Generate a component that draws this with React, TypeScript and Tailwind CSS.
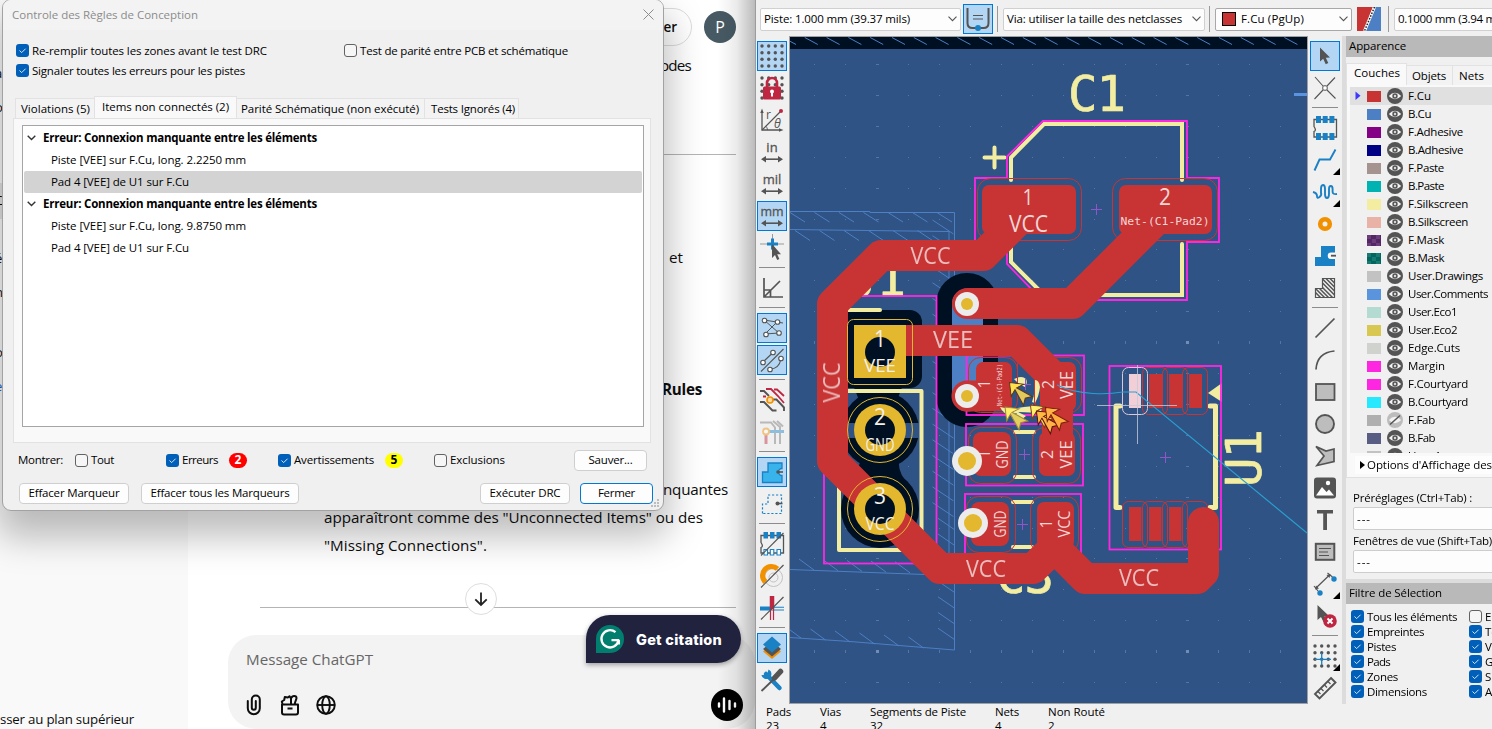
import React, { useLayoutEffect, useRef, useState } from "react";

/* Text run whose tracking is computed so that it fills a given width. */
function Fit({ w, className = "", children }: { w: number; className?: string; children: string }) {
  const ref = useRef<HTMLSpanElement>(null);
  const [ls, setLs] = useState(0);
  useLayoutEffect(() => {
    if (ref.current) setLs((w - ref.current.getBoundingClientRect().width) / children.length);
  }, [w, children]);
  return (
    <span ref={ref} className={"inline-block shrink-0 whitespace-pre " + className} style={{ letterSpacing: ls }}>
      {children}
    </span>
  );
}

function Check({ on = true }: { on?: boolean }) {
  return on ? (
    <span className="flex size-[13px] shrink-0 items-center justify-center rounded-[3px] bg-[#005fb8]">
      <svg width="9" height="9" viewBox="0 0 9 9" fill="none" stroke="#d8e8f8" strokeWidth="1">
        <path d="M1.5 4.5 L3.7 6.6 L7.6 2.7" />
      </svg>
    </span>
  ) : (
    <span className="size-[13px] shrink-0 rounded-[3px] border border-[#626262] bg-[#f6f6f6]" />
  );
}

function Button({ label, w, className = "" }: { label: string; w: number; className?: string }) {
  return (
    <button className={"flex h-[21px] items-center justify-center rounded-[4px] border bg-[#fdfdfd] " + className}>
      <Fit w={w}>{label}</Fit>
    </button>
  );
}

function TreeRow({ label, w, head = false, sel = false }: { label: string; w: number; head?: boolean; sel?: boolean }) {
  return (
    <div className={"mx-px flex h-[22px] items-center rounded-[2px] " + (sel ? "bg-[#d3d3d3]" : "")}>
      {head ? (
        <>
          <svg className="ml-[3px] mr-[7px] shrink-0" width="9" height="6" viewBox="0 0 9 6" fill="none" stroke="#333" strokeWidth="1.4">
            <path d="M0.7 0.8 L4.5 4.6 L8.3 0.8" />
          </svg>
          <Fit w={w} className="font-bold">{label}</Fit>
        </>
      ) : (
        <Fit w={w} className="ml-[27px]">{label}</Fit>
      )}
    </div>
  );
}

function DrcDialog() {
  return (
    <div className="absolute left-[2px] top-[-1px] flex h-[512px] w-[662px] flex-col overflow-hidden rounded-[9px] border border-[#a2a2a2] bg-[#f0f0f0] text-black">
      <div className="flex h-[30px] items-center justify-between bg-[#f3f3f3] pl-[9px] pr-[9px] text-[#8c8c8c]">
        <Fit w={186}>Controle des Règles de Conception</Fit>
        <svg className="mb-[2px]" width="11" height="11" viewBox="0 0 11 11" stroke="#8c8c8c" strokeWidth="1"><path d="M0.5 0.5 L10.5 10.5 M10.5 0.5 L0.5 10.5" /></svg>
      </div>
      <div className="flex flex-col pl-[13px] pt-[11px]">
        <div className="flex h-[19px] items-center gap-[3px]">
          <Check /><Fit w={235} className="mr-[74px]">Re-remplir toutes les zones avant le test DRC</Fit>
          <Check on={false} /><Fit w={208}>Test de parité entre PCB et schématique</Fit>
        </div>
        <div className="flex h-[21px] items-center gap-[3px]"><Check /><Fit w={213}>Signaler toutes les erreurs pour les pistes</Fit></div>
      </div>
      <div className="ml-[12px] mt-[15px] flex h-[22px] items-end">
        <div className="flex h-[20px] w-[79px] items-center border-l border-t border-[#e2e2e2] bg-[#f3f3f3] pl-[5px]"><Fit w={69}>Violations (5)</Fit></div>
        <div className="-mb-px flex h-[23px] w-[143px] items-center border border-b-0 border-[#e2e2e2] bg-[#f9f9f9] pb-[2px] pl-[7px]"><Fit w={127}>Items non connectés (2)</Fit></div>
        <div className="flex h-[20px] w-[188px] items-center border-r border-t border-[#e2e2e2] bg-[#f3f3f3] pl-[4px]"><Fit w={178}>Parité Schématique (non exécuté)</Fit></div>
        <div className="flex h-[20px] w-[94px] items-center border-r border-t border-[#e2e2e2] bg-[#f3f3f3] pl-[6px]"><Fit w={84}>Tests Ignorés (4)</Fit></div>
      </div>
      <div className="ml-[10px] h-[325px] w-[638px] border border-[#e2e2e2] bg-[#f9f9f9] pl-[8px] pt-[6px]">
        <div className="h-[302px] w-[622px] border border-[#a5a5a8] bg-white pt-[1px]">
          <TreeRow head label="Erreur: Connexion manquante entre les éléments" w={274} />
          <TreeRow label="Piste [VEE] sur F.Cu, long. 2.2250 mm" w={195} />
          <TreeRow sel label="Pad 4 [VEE] de U1 sur F.Cu" w={138} />
          <TreeRow head label="Erreur: Connexion manquante entre les éléments" w={274} />
          <TreeRow label="Piste [VEE] sur F.Cu, long. 9.8750 mm" w={195} />
          <TreeRow label="Pad 4 [VEE] de U1 sur F.Cu" w={138} />
        </div>
      </div>
      <div className="mt-[6px] flex h-[22px] items-center pl-[15px]">
        <Fit w={45} className="mr-[12px]">Montrer:</Fit>
        <div className="flex w-[91px] items-center gap-[3px]"><Check on={false} /><Fit w={23}>Tout</Fit></div>
        <div className="flex w-[112px] items-center gap-[3px]">
          <Check /><Fit w={36}>Erreurs</Fit>
          <span className="ml-[8px] flex h-[15px] w-[18px] items-center justify-center rounded-full bg-[#ff0000] text-[12px] font-bold text-white">2</span>
        </div>
        <div className="flex w-[156px] items-center gap-[3px]">
          <Check /><Fit w={80}>Avertissements</Fit>
          <span className="ml-[8px] flex h-[15px] w-[18px] items-center justify-center rounded-full bg-[#ffff00] text-[12px] font-bold">5</span>
        </div>
        <div className="flex w-[140px] items-center gap-[3px]"><Check on={false} /><Fit w={55}>Exclusions</Fit></div>
        <Button label="Sauver..." w={44} className="w-[73px] border-[#cfcfcf]" />
      </div>
      <div className="mt-[11px] flex h-[22px] items-center pl-[16px]">
        <Button label="Effacer Marqueur" w={91} className="mr-[12px] w-[110px] border-[#cfcfcf]" />
        <Button label="Effacer tous les Marqueurs" w={139} className="mr-[181px] w-[158px] border-[#cfcfcf]" />
        <Button label="Exécuter DRC" w={71} className="mr-[10px] w-[90px] border-[#cfcfcf]" />
        <Button label="Fermer" w={37} className="w-[73px] border-[#0078d4]" />
      </div>
      <svg className="absolute bottom-[2px] right-[3px]" width="9" height="9" fill="#bdbdbd">
        <path d="M6 0h2v2h-2zM3 3h2v2h-2zM6 3h2v2h-2zM0 6h2v2h-2zM3 6h2v2h-2zM6 6h2v2h-2z" />
      </svg>
    </div>
  );
}

function ChatPane() {
  return (
    <div className="relative flex h-[729px] w-[755px] shrink-0 overflow-hidden bg-white text-[#0d0d0d]">
      <div className="relative flex h-full w-[188px] shrink-0 flex-col items-start justify-end overflow-hidden bg-[#f9f9f9] pb-[1px]">
        <div className="absolute left-0 top-[183px] h-[36px] w-[10px] bg-[#e3e3e3]" />
        <div className="absolute left-[-5px] top-[64px] flex flex-col text-[13px] leading-[18px]">
          <span className="mb-[16px]">a</span><span className="mb-[75px]">o</span><span className="mb-[40px]">C</span><span className="mb-[16px]">é</span><span className="mb-[42px]">n</span><span className="mb-[16px]">o</span><span className="mb-[17px] text-[#1f5fd0]">e</span><span className="text-[#b78a2e]">I</span>
        </div>
        <Fit w={134} className="mb-[2px] text-[13.3px] leading-[14px]">sser au plan supérieur</Fit>
      </div>
      <div className="flex h-full w-[567px] flex-col text-[15.2px]">
        <div className="flex h-[53px] items-center justify-end pr-[19px]">
          <div className="mr-[12px] flex h-[38px] w-[90px] items-center justify-end rounded-full border border-[#dcdcdc] pr-[14px] text-[13.5px] font-semibold">Partager</div>
          <div className="flex size-8 items-center justify-center rounded-full bg-[#475a64] text-[16px] text-white">P</div>
        </div>
        <div className="flex h-[24px] items-center justify-end pr-[64px]"><Fit w={31}>odes</Fit></div>
        <div className="ml-[72px] mr-[19px] mt-[77px] h-px shrink-0 bg-[#b4b4b4]" />
        <div className="mt-[90px] flex h-[24px] items-center justify-end pr-[72px]"><Fit w={14}>et</Fit></div>
        <div className="mt-[108px] flex h-[24px] items-center justify-end pr-[53px]"><Fit w={40} className="font-bold">Rules</Fit></div>
        <div className="mt-[74px] flex h-[28px] items-center justify-end pr-[27px]"><Fit w={65}>nquantes</Fit></div>
        <div className="flex h-[28px] items-center pl-[136px]"><Fit w={379}>{'apparaîtront comme des "Unconnected Items" ou des'}</Fit></div>
        <div className="flex h-[28px] items-center pl-[136px]"><Fit w={163}>{'"Missing Connections".'}</Fit></div>
        <div className="relative ml-[72px] mr-[19px] mt-[48px] h-px shrink-0 bg-[#b4b4b4]">
          <div className="absolute left-[205px] top-[-24px] flex size-8 items-center justify-center rounded-full border border-[#dedede] bg-white">
            <svg width="14" height="16" viewBox="0 0 14 16" fill="none" stroke="#222" strokeWidth="1.8"><path d="M7 1.5V14 M1.3 8.3 L7 14 L12.7 8.3" /></svg>
          </div>
        </div>
        <div className="ml-[40px] mt-[27px] flex h-[94px] shrink-0 flex-col rounded-[28px] bg-[#f3f3f3] pl-[18px] pt-[16px]">
          <Fit w={127} className="w-max text-[#666]">Message ChatGPT</Fit>
          <div className="mt-[22px] flex h-8 items-center">
            <svg width="16" height="22" viewBox="0 0 16 22" fill="none" stroke="#0d0d0d" strokeWidth="2" strokeLinecap="round"><path d="M1.8 7v7.2a6 6 0 0 0 12 0V5.6a4 4 0 0 0-8 0v8.2a2 2 0 0 0 4 0V7" /></svg>
            <svg className="ml-[18px]" width="20" height="22" viewBox="0 0 20 22" fill="none" stroke="#0d0d0d" strokeWidth="2" strokeLinejoin="round"><path d="M2 10.5h16v8a2 2 0 0 1-2 2H4a2 2 0 0 1-2-2z M2.5 10L1.8 7.500 4.200 6l.6-3 3 .6 1.700-1.400 1.500 2.300 0 5.500 M11.500 4c.5-2.600 5-2.600 5 0 0 1.800-1.500 3-1.700 6 M7.500 14.500h5" /></svg>
            <svg className="ml-[16px]" width="20" height="20" viewBox="0 0 20 20" fill="none" stroke="#0d0d0d" strokeWidth="1.9"><circle cx="10" cy="10" r="8.8" /><ellipse cx="10" cy="10" rx="3.8" ry="8.8" /><path d="M1 10h18" /></svg>
            <div className="ml-[375px] flex size-8 items-center justify-center rounded-full bg-black">
              <svg width="20" height="18" viewBox="0 0 20 18" stroke="white" strokeWidth="2.4" strokeLinecap="round"><path d="M2 7.5v3 M7 2.5v13 M12.5 5v8 M18 7.5v3" /></svg>
            </div>
          </div>
        </div>
      </div>
      <div className="absolute left-[3px] top-0 h-[511px] w-[660px] rounded-[9px] shadow-[0_20px_36px_6px_rgba(0,0,0,0.26)]" />
      <div className="absolute left-[718px] top-0 h-full w-[37px] bg-linear-to-r from-[#00000000] via-[#00000014] to-[#00000044]" />
      <div className="absolute left-[586px] top-[615px] flex h-[48px] w-[155px] items-center rounded-[24px] rounded-bl-none bg-[#20223e] pl-[10px] text-white shadow-[0_2px_5px_rgba(0,0,0,0.35)]">
        <div className="flex size-[28px] items-center justify-center rounded-full rounded-bl-none bg-[#027e6f]">
          <svg width="22" height="22" viewBox="0 0 22 22" fill="none" stroke="white" strokeWidth="2.3"><path d="M16.5 4.2 A8.6 8.6 0 1 0 19.5 12.3 M12.5 12.1 H20.3 M19.8 12 V16.6" /></svg>
        </div>
        <Fit w={86} className="ml-[12px] mt-px font-['Inter',sans-serif] text-[14.5px] font-extrabold">Get citation</Fit>
      </div>
      <DrcDialog />
    </div>
  );
}

/* ---------- toolbar icons ---------- */
const G = "#545454";
const B = "#1a81c4";
const R = "#bf2641";
const O = "#f29100";
const dots = (skip = false) =>
  [2, 8.7, 15.3, 22].flatMap((y) => [2, 8.7, 15.3, 22].map((x) => (skip && y > 9 && x > 3 && x < 21 ? null : <circle key={x + "-" + y} cx={x} cy={y} r="1.7" fill={G} />)));
const unit = (t: string, size: number) => (
  <>
    <text x="12" y="12" textAnchor="middle" fontSize={size} fill={G} className="font-['Open_Sans',sans-serif]" stroke={G} strokeWidth="0.3">{t}</text>
    <path d="M3 19.2H21" stroke={G} strokeWidth="1.6" /><path d="M6 16l-5 3.2 5 3.2z M18 16l5 3.2-5 3.2z" fill={G} />
  </>
);
const slash = <path d="M1 23.5L23.5 1" stroke={G} strokeWidth="1.2" />;
const node = (x: number, y: number, r = 2.3) => <circle key={x + "," + y} cx={x} cy={y} r={r} fill="white" stroke={G} strokeWidth="1.1" />;
const chip = <path d="M1 3.5H23.5V21H1V15.5q2.8-1 0-5z" fill="none" stroke={G} strokeWidth="1.3" />;
const corner = <path d="M27 27H20L27 20z" fill="#000" />;

const leftIcons: (React.ReactNode | "sep")[] = [
  <>{dots()}</>,
  <>{dots(true)}<path d="M7 13V7a5 5 0 0 1 10 0v6" fill="none" stroke={R} strokeWidth="2.6" /><rect x="3" y="10.5" width="18" height="13" rx="1.5" fill={R} /><circle cx="12" cy="15.5" r="2" fill="#fff" /><path d="M11 16h2v4.5h-2z" fill="#fff" /></>,
  <><path d="M2 3V22H21" fill="none" stroke={G} strokeWidth="1.3" /><path d="M0.3 5L2 0.5 3.7 5z M19 20.3l4.5 1.7-4.5 1.7z" fill={G} /><path d="M2 22L20 4" stroke={G} strokeWidth="1.2" /><circle cx="21" cy="3" r="2" fill={R} /><text x="6" y="11" fontSize="12" fill={G} className="font-['Open_Sans',sans-serif]">r</text><text x="14" y="19.5" fontSize="12.5" fontStyle="italic" fill={G} className="font-['Open_Sans',sans-serif]">θ</text><path d="M5.5 18q2 1.5 2 4" fill="none" stroke={G} strokeWidth="0.9" /></>,
  unit("in", 13),
  unit("mil", 13),
  unit("mm", 12.5),
  <><path d="M0 8H24 M12.5 -2V20" stroke="#999" strokeWidth="1" /><path d="M7 8H18 M12.5 2.5V13.5" stroke={B} strokeWidth="3" /><path d="M12 8V22l3-3 2.2 5 2.2-1-2.2-4.8H21z" fill={G} /></>,
  "sep",
  <path d="M4 2V21H23 M4 21L20 5 M4 14h6.5v7" fill="none" stroke={G} strokeWidth="1.7" />,
  "sep",
  <><path d="M4 4L19 17 M17 6L5 18 M4 4L23 7 M5 18L19 17" stroke={G} strokeWidth="1" />{node(4.5, 4.5)}{node(17.5, 6)}{node(6, 18.5)}{node(19, 17)}</>,
  <><path d="M1 23.5L23.5 1 M3 14L12.5 5 M10 21q9 0 11-10" fill="none" stroke={G} strokeWidth="1.1" />{node(3, 14.5)}{node(13, 4.5)}{node(10, 21.5)}{node(21, 10.5)}</>,
  "sep",
  <><path d="M0 3h4l5 5 M0 14h4l8.5 8.5h4M13 11.5h3.5L24 19.5V23" fill="none" stroke={G} strokeWidth="1.9" /><path d="M6 1h5l7 7 6 7 M14 1.5h3l7 6.5 M3 8.5h3" fill="none" stroke={R} strokeWidth="1.8" /><circle cx="10" cy="12" r="3" fill="#ffd9a0" stroke={O} strokeWidth="1.6" /></>,
  <g opacity="0.45"><path d="M0 2.5h11l4 5V24 M13 1l7 6v17 M17 1l6 5.5" fill="none" stroke="#777" strokeWidth="2" /><path d="M6 11.5v12.5" stroke={R} strokeWidth="3" /><path d="M8 11.5H24" stroke={B} strokeWidth="3" /><circle cx="6" cy="11.5" r="3" fill="#fff" stroke={O} strokeWidth="1.8" /></g>,
  "sep",
  <><path d="M2.5 22.5V12H8V3H22V8.5a3.5 3.5 0 1 0 0 7V22.5z" fill="#39b3ec" stroke={B} strokeWidth="1.3" /><circle cx="18" cy="12" r="1.8" fill={G} /><path d="M18 12h5" stroke={G} strokeWidth="1.6" /></>,
  <><path d="M2.5 21.5V12H8V3H21.5V21.5z" fill="none" stroke={B} strokeWidth="1.2" strokeDasharray="2.2 1.8" /><circle cx="17.5" cy="11.5" r="2" fill={G} /><path d="M17.5 11.5h5" stroke={G} strokeWidth="1.6" /></>,
  "sep",
  <>{chip}<path d="M3.5 0h4.5v6.5h-4.5zM10 0h4.5v6.5h-4.5zM16.5 0h4.5v6.5h-4.5z" fill={B} /><path d="M4 17.5h3.5v5.5H4zM10.3 17.5h3.5v5.5h-3.5zM17 17.5h3.5v5.5H17z" fill="#fff" stroke={B} strokeWidth="1.1" />{slash}</>,
  <><circle cx="13.5" cy="13.5" r="9" fill="none" stroke="#c2c2c2" strokeWidth="1" /><circle cx="13.5" cy="13.5" r="4.5" fill="none" stroke="#c2c2c2" strokeWidth="1" /><path d="M5.5 18A7.3 7.3 0 0 1 17.5 4.8" fill="none" stroke={O} strokeWidth="5.2" />{slash}</>,
  <><path d="M0 12.5h12" stroke={B} strokeWidth="4" /><path d="M12 11.2h12M12 14h12" stroke={B} strokeWidth="1.1" /><path d="M12 0v13" stroke={R} strokeWidth="4.5" /><path d="M10.5 13v11M13.5 13v11" stroke={R} strokeWidth="1.2" />{slash}</>,
  "sep",
  <><path d="M12 8l9 7.5-9 7.5-9-7.5z" fill={O} /><path d="M12 5.5l9 7.5-9 7.5-9-7.5z" fill={G} /><path d="M12 0.5l9 8-9 8-9-8z" fill={B} /></>,
  <><path d="M6 6L19.5 20" stroke={B} strokeWidth="4.5" strokeLinecap="round" /><path d="M8.5 1.5A5 5 0 1 1 1.5 7l3.5 0 2.5-2z" fill={B} /><path d="M1.5 23L14 11" stroke={G} strokeWidth="1.8" /><path d="M14.5 10L20.5 3.5" stroke={G} strokeWidth="5.5" strokeLinecap="round" /></>,
];

const rightIcons: (React.ReactNode | "sep")[] = [
  <path d="M7 3.5V17.5l3.2-2.8 2.5 5.5 2.6-1.1-2.5-5.3 4.2-.2z" fill={G} />,
  <><path d="M2 1L10 10M22 1.5L14 10M14 14l8.5 8.5M10 14L1.5 23" stroke={G} strokeWidth="1.1" /><rect x="9.8" y="9.8" width="4.4" height="4.4" rx="1.2" fill="#fff" stroke={G} /></>,
  "sep",
  <>{chip}<path d="M3 0h5v7H3zM9.7 0h5v7h-5zM16.4 0h5v7h-5zM3 17h5v7H3zM9.7 17h5v7h-5zM16.4 17h5v7h-5z" fill={B} /></>,
  <><path d="M1.5 22.5L6.5 11.5H17L22.5 1.5" fill="none" stroke={B} strokeWidth="1.9" />{corner}</>,
  <><path d="M0 12q4 1 4 4t2.5 1 1.5-4V9q0-4 2-4t2 4v5q0 4 2 4t2-4V9q0-3 1.8-3t1.8 3v3q0 2.5 4.4 2" fill="none" stroke={B} strokeWidth="1.9" />{corner}</>,
  <circle cx="12" cy="12" r="4.8" fill="none" stroke={O} strokeWidth="4.6" />,
  <><path d="M2 22V13H8V2H22V8.5H18a3 3 0 0 0 0 6.5H22V22z" fill={B} /><path d="M18 11.7h5" stroke={G} strokeWidth="1.8" /><path d="M22 9.5h-4a2 2 0 0 0 0 4.5h4" fill="none" stroke="#fff" strokeWidth="1.2" /></>,
  <><path d="M2.5 21.5V12.5H9.5V2.5H21.5V21.5z" fill="none" stroke={G} strokeWidth="1.2" /><path d="M9.5 3L21.5 15M13 2.5L21.5 11M17 2.5l4.5 4.5M9.5 7L21.5 19M9.5 11.5l10 10M6.5 12.5l9 9M3 13l8.5 8.5M2.5 16.5l5 5" stroke={G} strokeWidth="1.5" /></>,
  "sep",
  <path d="M2.5 21.5L21.5 2.5" stroke={G} strokeWidth="1.7" />,
  <path d="M3 21.5Q4 4.5 21.5 3" fill="none" stroke={G} strokeWidth="1.7" />,
  <rect x="3" y="4" width="18.5" height="16" fill="#bdbdbd" stroke={G} strokeWidth="1.8" />,
  <circle cx="12" cy="12" r="9" fill="#bdbdbd" stroke={G} strokeWidth="1.9" />,
  <path d="M3 2.5L13 7L21 5V17.5L4 21.5L11 12z" fill="#bdbdbd" stroke={G} strokeWidth="1.7" />,
  <><rect x="1" y="1.5" width="22" height="21" rx="3" fill={G} /><path d="M3 19.5L9 11l4.5 5 2.5-2.5 5 6z" fill="#fff" /><circle cx="15" cy="7" r="2.2" fill="#fff" /></>,
  <path d="M4 2H20V5.5H14V22H10.2V5.5H4z" fill={G} />,
  <><rect x="2.8" y="3.8" width="18.5" height="16" fill="#bdbdbd" stroke={G} strokeWidth="2" /><path d="M6 8.5H18M6 12H15M6 15.5H16" stroke={G} strokeWidth="1.2" /></>,
  <><path d="M1 14l4 5M14.5 1l5 4M3 16L17 2.5" stroke={G} strokeWidth="1.2" /><path d="M2 17.5l1-4 3 3zM17.5 2l-4 1 3 3z" fill={G} /><circle cx="7" cy="21" r="2.7" fill={B} /><circle cx="21" cy="7" r="2.7" fill={B} />{corner}</>,
  <><path d="M4.5 1V16l3.5-3 2.5 5L13 16l-1.5-4h4.5z" fill={G} /><circle cx="17" cy="17" r="6.8" fill={R} /><path d="M14.5 14.5l5 5M19.5 14.5l-5 5" stroke="#fff" strokeWidth="2" /></>,
  "sep",
  <>{dots()}<path d="M8.7 9v12M2 15.3h16" stroke={B} strokeWidth="1.3" />{corner}</>,
  <><path d="M18 2l4.5 4.5L6.5 22.5 2 18z" fill="none" stroke={G} strokeWidth="1.9" /><path d="M15 5.5l2.5 2.5M11.5 9l2.5 2.5M8 12.5l2.5 2.5M5 15.5l2.5 2.5" stroke={G} strokeWidth="1.3" /></>,
];

function ToolColumn({ icons, active, className }: { icons: (React.ReactNode | "sep")[]; active: number[]; className: string }) {
  return (
    <div className={"flex shrink-0 flex-col items-center bg-[#f0f0f0] " + className}>
      {icons.map((ic, i) =>
        ic === "sep" ? (
          <div key={i} className="flex h-2 w-[26px] shrink-0 items-start pt-[3px]"><div className="h-px w-full bg-[#8c8c8c]" /></div>
        ) : (
          <div key={i} className="flex h-8 shrink-0 items-center">
            <div className={"flex size-[30px] items-center justify-center " + (active.includes(i) ? "border border-[#0078d7] bg-[#b3d6f4]" : "")}>
              <svg width="24" height="24" viewBox="0 0 24 24" className="overflow-visible">{ic}</svg>
            </div>
          </div>
        )
      )}
    </div>
  );
}

/* ---------- board ---------- */
const RED = "#c83434";
const SILK = "#f2eda1";
const MAG = "#ff26e2";
const NIGHT = "#001023";
const GOLD = "#e3b72e";
const BCU = "#4d7fc4";
const BOARD = "#2f5385";

function Label({ x, y, size, w, rot, fill = "#f2d6d6", mono = false, children }: { x: number; y: number; size: number; w: number; rot?: boolean; fill?: string; mono?: boolean; children: string }) {
  return (
    <text
      transform={`translate(${x} ${y})${rot ? " rotate(-90)" : ""}`}
      y={size * 0.357}
      fontSize={size}
      textAnchor="middle"
      textLength={w}
      lengthAdjust="spacingAndGlyphs"
      fill={fill}
      className={mono ? "font-['DejaVu_Sans_Mono',monospace]" : "font-['Open_Sans',sans-serif]"}
    >
      {children}
    </text>
  );
}

function Silk({ x, y, rot, children }: { x: number; y: number; rot?: boolean; children: string }) {
  return (
    <text transform={`translate(${x} ${y})${rot ? " rotate(-90)" : ""}`} fontSize="49" fill={SILK} stroke={SILK} strokeWidth="0.7" strokeLinejoin="round" textLength="58" className="font-['DejaVu_Sans_Mono',monospace]">
      {children}
    </text>
  );
}

function Marker({ x, y, fill, head, stroke }: { x: number; y: number; fill: string; head: string; stroke: string }) {
  return (
    <g transform={`translate(${x} ${y}) scale(1.75)`}>
      <path d="M0 0L8 1L4 3L13 8L9 9L8 13L3 4L1 8z" fill={fill} stroke={stroke} strokeWidth="0.6" />
      <path d="M0.5 0.5L7 1.2L3.5 3L1.2 6.5z" fill={head} />
    </g>
  );
}

const cross = (x: number, y: number) => <path key={x + "x" + y} d={`M${x - 5.5} ${y}h11M${x} ${y - 5.5}v11`} stroke="#8f55c9" strokeWidth="1" />;
const seq = (n: number) => Array.from({ length: n }, (_, i) => i);

function Board() {
  return (
    <svg className="shrink-0 bg-[#2f5385]" width="517" height="666" viewBox="790 37 517 666">
      <rect x="790" y="37" width="517" height="12" fill={NIGHT} />
      <g stroke={BCU} strokeWidth="1" fill="none">
        {seq(24).map((i) => <path key={i} d={`M${783 + i * 21.8} 37.5l13 7`} />)}
        <path d="M790 211.5H870L870 212.5H954.5V650M790 229.5L828 230L949 231.5V553M790 569.5L925 574.5M790 637.5L850 641.5L954.5 650" />
        {seq(7).map((i) => <path key={"a" + i} d={`M${790 + i * 24.5} 212.5l15 9.5`} />)}
        {seq(6).map((i) => <path key={"b" + i} d={`M${795 + i * 24.5} 230.5l15 10`} />)}
        {seq(27).map((i) => <path key={"c" + i} d={`M${i > 18 ? 938 : 932.5} ${220 + i * 15.7}l${i > 18 ? 16 : 21} ${i > 18 ? 11 : 14}`} />)}
        {seq(5).map((i) => <path key={"d" + i} d={`M${799 + i * 24} ${559 + i * 0.7}l15 11`} />)}
        {seq(6).map((i) => <path key={"e" + i} d={`M${786 + i * 24.5} ${627 + i * 2}l15 11`} />)}
      </g>
      <g fill="#6f8db5">
        {seq(17).flatMap((c) => seq(21).map((r) => {
          const mx = c === 2 || c === 12;
          const my = r === 9 || r === 19;
          const X = 814 + c * 31 + (c >= 2 ? 1 : 0);
          const Y = 64 + r * 30.9;
          return <rect key={c + "." + r} x={Math.round(X) - (mx ? 1 : 0)} y={Math.round(Y) - (my ? 1 : 0)} width={mx ? 3 : 1} height={my ? 3 : 1} opacity={mx && my ? 1 : 0.6} />;
        }))}
      </g>

      {/* clearance areas */}
      <path d="M967 304V396" stroke={NIGHT} strokeWidth="62" strokeLinecap="round" />
      <path d="M967.5 304V396" stroke={BCU} strokeWidth="31" strokeLinecap="round" />
      <rect x="838" y="310" width="84" height="78" rx="12" fill={NIGHT} />
      <path d="M853 385h50l-6 15h-38zM862 455h37q-2 15 6 25h-50z" fill={NIGHT} />
      <circle cx="880" cy="430" r="39" fill={NIGHT} />
      <circle cx="880" cy="509" r="39" fill={NIGHT} />
      <rect x="840" y="423" width="80" height="15" fill={BOARD} />

      <Silk x={1068} y={111}>C1</Silk>
      <Silk x={848} y={295.5}>J1</Silk>
      <Silk x={996} y={592.5}>C3</Silk>
      <Silk x={1261} y={487} rot>U1</Silk>
      <g fill="none" stroke={SILK} strokeWidth="4" strokeLinecap="round">
        <path d="M984.5 157.5h20M994.5 147.5v20" />
        <path d="M1011 180V157.5L1044 124H1182V180M1182 244V295H1044L1011 262V242" />
        <path d="M840 310H880M840 391H921.5V550H839V391" strokeLinejoin="round" />
        <path d="M1015 432h19M1015 477h19M1013 502h19M1013 547h19" />
        <path d="M1120 406H1116V507.5H1120M1210 406H1215.5V507.5H1210" strokeWidth="5" strokeLinejoin="round" />
      </g>
      <path d="M1208 393L1222 383V402z" fill={SILK} />

      {/* courtyards */}
      <g fill="none" stroke={MAG} strokeWidth="1.8">
        <path d="M1043 121H1187V178H1219V242H1187V300H1042L1007 264V241H975V178H1007V156.5z" />
        <rect x="824" y="296" width="112.5" height="267.5" />
        <rect x="966.5" y="355.5" width="117.5" height="59.5" />
        <rect x="966" y="424" width="117" height="61.5" />
        <rect x="965" y="494" width="116" height="62" />
        <rect x="1109.5" y="366" width="111.5" height="183.5" />
      </g>

      {/* pad clearances */}
      <g fill="none" stroke={RED} strokeWidth="1">
        <rect x="977.5" y="178.5" width="104" height="62" rx="13" />
        <rect x="1112.5" y="178.5" width="105" height="62" rx="13" />
        <rect x="968.5" y="357.5" width="49" height="55" rx="12" />
        <rect x="1034.5" y="357.5" width="47" height="55" rx="12" />
        <rect x="968.5" y="427.5" width="48" height="56" rx="12" />
        <rect x="1032.5" y="427.5" width="48" height="56" rx="12" />
        <rect x="966.5" y="496.5" width="49" height="56" rx="12" />
        <rect x="1030.5" y="496.5" width="48" height="56" rx="12" />
        {[1142.5, 1162.5, 1182.5].map((x) => <rect key={x} x={x} y="367.5" width="25" height="47" rx="6" />)}
        {[1122.5, 1142.5, 1162.5, 1182.5].map((x) => <rect key={x} x={x} y="501.5" width="25" height="46" rx="6" />)}
      </g>
      <g fill={RED}>
        <rect x="982" y="185" width="94" height="49" rx="7" />
        <rect x="1119" y="185" width="93" height="49" rx="7" />
        <rect x="976" y="362" width="36" height="49" rx="7" />
        <rect x="1040" y="362" width="36" height="49" rx="7" />
        <rect x="973" y="432" width="38" height="44" rx="8" />
        <rect x="1039" y="432" width="36" height="44" rx="7" />
        <rect x="971" y="502" width="38" height="44" rx="8" />
        <rect x="1037" y="502" width="37" height="46" rx="7" />
        {[1149, 1169, 1189].map((x) => <rect key={x} x={x} y="374" width="13" height="34" />)}
        {[1129, 1149, 1169].map((x) => <rect key={x} x={x} y="507" width="12.5" height="34" />)}
      </g>

      {/* tracks */}
      <g fill="none" stroke={RED} strokeWidth="31" strokeLinecap="round" strokeLinejoin="round">
        <path d="M1024 214.5L983 255.5H881L832.5 304V461L880 508.5L940 568.5H1033L1054.3 547.4V530" />
        <path d="M1054.3 547.4L1085.4 578.5H1197L1203.5 572V522.5" />
        <path d="M885 340.5H1017L1057.5 381V450" />
        <path d="M1160 216L1072.5 303.5H967.5" />
        <path d="M967 396H992" />
      </g>

      {/* through-hole pads */}
      <rect x="854" y="325" width="52" height="53" fill={GOLD} />
      <circle cx="880" cy="430" r="26" fill={GOLD} />
      <circle cx="880" cy="509" r="26" fill={GOLD} />
      <g fill={NIGHT}><circle cx="880" cy="352" r="15" /><circle cx="880" cy="430" r="15" /><circle cx="880" cy="509" r="15" /></g>
      <g fill="none" stroke={GOLD} strokeWidth="1">
        <rect x="847.5" y="319.5" width="65" height="65" rx="6" />
        <circle cx="880" cy="430" r="32.5" /><circle cx="880" cy="509" r="32.5" />
      </g>

      {/* designator remains */}
      <path d="M1014 379q8-4 12 0q2 4-1 8l-6-3zM1034 380q5-1 6 7q-1 9-5 16l-3-1q3-8 2-13zM1000 407l10 2 14-2 10-1 8 1-1 6-22-1-8 3q-8-1-11-8zM1012 418l6-6 8 4-5 4z" fill={SILK} />
      <path d="M1017.5 363V392M1034.5 378V404" stroke={RED} strokeWidth="1" />
      {cross(1096.5, 209.5)}{cross(1025.5, 384.5)}{cross(1024.5, 454.5)}{cross(1022.5, 524.5)}{cross(1165.5, 457.5)}

      <Label x={1028} y={197} size={22} w={11}>1</Label>
      <Label x={1028.5} y={223} size={24} w={39}>VCC</Label>
      <Label x={1165} y={197} size={23} w={12}>2</Label>
      <Label x={1165} y={221.5} size={11} w={89} mono>Net-(C1-Pad2)</Label>
      <g opacity="0.85">
        <Label x={930.5} y={255.5} size={24} w={40}>VCC</Label>
        <Label x={953} y={340} size={23} w={40}>VEE</Label>
        <Label x={986} y={568} size={24} w={40}>VCC</Label>
        <Label x={1139} y={577.5} size={24} w={40}>VCC</Label>
        <Label x={831} y={382.5} size={24} w={40} rot>VCC</Label>
      </g>
      <Label x={880} y={338.5} size={23} w={12} fill="#f4f0e6">1</Label>
      <Label x={880} y={366} size={17.5} w={32} fill="#f4f0e6">VEE</Label>
      <Label x={880} y={417} size={23} w={12} fill="#f4f0e6">2</Label>
      <Label x={880} y={445} size={17.5} w={29} fill="#f4f0e6">GND</Label>
      <Label x={880} y={495.5} size={23} w={12} fill="#f4f0e6">3</Label>
      <Label x={880} y={523.5} size={17.5} w={29} fill="#f4f0e6">VCC</Label>
      <Label x={984} y={384} size={17} w={9} rot>1</Label>
      <Label x={999} y={385} size={7} w={42} rot mono>Net-(C1-Pad2)</Label>
      <Label x={1048} y={384.5} size={17} w={9} rot>2</Label>
      <Label x={1067} y={385} size={17.5} w={28} rot>VEE</Label>
      <Label x={984.5} y={454} size={16} w={9} rot>1</Label>
      <Label x={1002} y={454.5} size={16.5} w={28} rot>GND</Label>
      <Label x={1047} y={454.5} size={16.5} w={9} rot>2</Label>
      <Label x={1066} y={454.5} size={17} w={28} rot>VEE</Label>
      <Label x={1000.5} y={524} size={16.5} w={27} rot>GND</Label>
      <Label x={1046} y={524} size={16.5} w={9} rot>1</Label>
      <Label x={1064.5} y={524} size={16.5} w={27} rot>VCC</Label>

      {/* vias */}
      {[[967, 304, 12, 6], [967, 396, 12, 6], [967, 461, 15, 9], [973, 523, 15, 9]].map(([x, y, a, b]) => (
        <g key={y}><circle cx={x} cy={y} r={a} fill="#ececec" /><circle cx={x} cy={y} r={b} fill={GOLD} /></g>
      ))}

      {/* highlighted pad and airwires */}
      <rect x="1129" y="374" width="12" height="34" fill="#f2ced6" />
      <rect x="1122.5" y="367.5" width="25" height="47" rx="6" fill="none" stroke="#dcc8d4" />
      <path d="M1057 385q14 7 36 8.5q15 1 30-1.5l13 0L1307 533" fill="none" stroke="#2a9fd0" strokeWidth="1.1" />
      <path d="M1097 405.5h80M1137.5 365v79" stroke="#c5cbd8" strokeWidth="1" opacity="0.8" />
      <path d="M1294 94.5h13" stroke="#5a94e0" strokeWidth="3" />

      <Marker x={1009.5} y={382.5} fill="#e3c95c" head="#ffe04a" stroke="#5a3a1c" />
      <Marker x={1005} y={407} fill="#e3cf5e" head="#fff06a" stroke="#a08a3c" />
      <Marker x={1030.5} y={405} fill="#f4dd58" head="#fff06a" stroke="#8a3a1c" />
      <Marker x={1036.5} y={411} fill="#ffb347" head="#ffb940" stroke="#5c140c" />
      <Marker x={1045.5} y={407.5} fill="#ffab40" head="#ffb347" stroke="#7c200c" />
    </svg>
  );
}

/* ---------- right dock ---------- */
const layers: [string, string, number][] = [
  ["F.Cu", "bg-[#c83434]", 23], ["B.Cu", "bg-[#4d7fc4]", 23], ["F.Adhesive", "bg-[#840084]", 55], ["B.Adhesive", "bg-[#000084]", 55],
  ["F.Paste", "bg-[#a5938f]", 36], ["B.Paste", "bg-[#00b3b3]", 36], ["F.Silkscreen", "bg-[#f2eda1]", 60], ["B.Silkscreen", "bg-[#e8b2a7]", 60],
  ["F.Mask", "bg-[repeating-conic-gradient(#522763_0_25%,#6c3d7d_0_50%)] bg-size-[9px_8px]", 36], ["B.Mask", "bg-[repeating-conic-gradient(#02665f_0_25%,#187a73_0_50%)] bg-size-[9px_8px]", 36],
  ["User.Drawings", "bg-[#c2c2c2]", 75], ["User.Comments", "bg-[#5994dc]", 80], ["User.Eco1", "bg-[#b4dbd2]", 49], ["User.Eco2", "bg-[#d8c852]", 49],
  ["Edge.Cuts", "bg-[#d0d2cd]", 52], ["Margin", "bg-[#ff26e2]", 37], ["F.Courtyard", "bg-[#ff26e2]", 60], ["B.Courtyard", "bg-[#26e9ff]", 60],
  ["F.Fab", "bg-[#afafaf]", 27], ["B.Fab", "bg-[#585d84]", 27], ["User.1", "bg-[#c2c2c2]", 33],
];

function Eye({ off }: { off: boolean }) {
  return (
    <svg className="shrink-0" width="16" height="16" viewBox="0 0 16 16">
      <circle cx="8" cy="8" r="8" fill={off ? "#bcbcbc" : "#545454"} />
      <path d="M1.8 8Q8 1.5 14.2 8Q8 14.5 1.8 8z" fill="#f2f2f2" />
      {off ? <path d="M3 12.5L13 3.5" stroke="#545454" strokeWidth="1.5" /> : <><circle cx="8" cy="8" r="2.7" fill="#545454" /><circle cx="8" cy="8" r="1.2" fill="#d8d8d8" /></>}
    </svg>
  );
}

function Dock() {
  return (
    <div className="flex h-[668px] w-[150px] shrink-0 flex-col overflow-hidden border-l-4 border-[#dcdcdc] bg-[#f0f0f0]">
      <div className="flex h-[21px] shrink-0 items-center bg-[#b9b9b9] pb-px pl-[3px]"><Fit w={57}>Apparence</Fit></div>
      <div className="mt-[6px] flex h-[22px] shrink-0 items-end">
        <div className="flex h-[22px] w-[61px] shrink-0 items-center border border-b-0 border-[#e2e2e2] bg-[#f9f9f9] pb-[3px] pl-[7px]"><Fit w={46}>Couches</Fit></div>
        <div className="flex h-[20px] w-[46px] shrink-0 items-center border-r border-t border-[#e2e2e2] bg-[#f3f3f3] pl-[5px]"><Fit w={34}>Objets</Fit></div>
        <div className="flex h-[20px] w-[60px] shrink-0 items-center border-t border-[#e2e2e2] bg-[#f3f3f3] pl-[6px]"><Fit w={25}>Nets</Fit></div>
      </div>
      <div className="flex h-[393px] shrink-0 flex-col border-b border-l border-[#e0e0e0] bg-[#f9f9f9] pl-[3px] pt-[2px]">
        <div className="flex h-[366px] w-[142px] flex-col overflow-hidden bg-[#f0f0f0]">
          {layers.map(([name, color, w], i) => (
            <div key={name} className={"flex h-[18px] shrink-0 items-center " + (i === 0 ? "bg-[#e0e0e0]" : "")}>
              <svg className="ml-[5px] mr-[6px] shrink-0" width="6" height="10"><path d="M0.5 0.5V9L5.5 4.8z" fill={i === 0 ? "#3a3aff" : "transparent"} /></svg>
              <div className={"h-[11px] w-[14px] shrink-0 " + color} />
              <div className="ml-[6px] mr-[5px] flex"><Eye off={name === "F.Fab"} /></div>
              <Fit w={w}>{name}</Fit>
            </div>
          ))}
        </div>
        <div className="ml-[5px] mt-[3px] flex h-[18px] w-[142px] items-center bg-[#fdfdfd] pl-[5px]">
          <svg className="mr-[2px] shrink-0" width="5" height="8"><path d="M0 0V8L5 4z" fill="#000" /></svg>
          <Fit w={125}>Options d'Affichage des</Fit>
        </div>
      </div>
      <div className="mt-[12px] flex h-4 shrink-0 items-center pl-[7px]"><Fit w={119}>Préréglages (Ctrl+Tab) :</Fit></div>
      <div className="ml-[7px] mt-px flex h-[23px] w-[160px] shrink-0 items-center rounded-[2px] border border-[#cdcdcd] bg-[#fdfdfd] pl-[3px]"><Fit w={14}>---</Fit></div>
      <div className="mt-[3px] flex h-4 shrink-0 items-center pl-[7px]"><Fit w={139}>Fenêtres de vue (Shift+Tab)</Fit></div>
      <div className="ml-[7px] mt-px flex h-[23px] w-[160px] shrink-0 items-center rounded-[2px] border border-[#cdcdcd] bg-[#fdfdfd] pl-[3px]"><Fit w={14}>---</Fit></div>
      <div className="mt-[6px] h-[4px] shrink-0 bg-[#dcdcdc]" />
      <div className="flex h-[21px] shrink-0 items-center bg-[#b9b9b9] pb-px pl-[3px]"><Fit w={93}>Filtre de Sélection</Fit></div>
      <div className="mt-[5px] flex flex-col pl-[5px]">
        {([["Tous les éléments", 90, "Ele"], ["Empreintes", 57, "Texte"], ["Pistes", 29, "Vias"], ["Pads", 23, "Graph"], ["Zones", 31, "Sur"], ["Dimensions", 60, "Autres"]] as [string, number, string][]).map(([a, w, b], i) => (
          <div key={a} className="flex h-[15px] w-[160px] items-center">
            <Check /><div className="ml-[3px] w-[102px] shrink-0 leading-[15px]"><Fit w={w}>{a}</Fit></div>
            <Check on={i > 0} /><span className="ml-[3px]">{b}</span>
          </div>
        ))}
      </div>
    </div>
  );
}

function Combo({ className, children }: { className: string; children: React.ReactNode }) {
  return (
    <div className={"flex h-[23px] shrink-0 items-center justify-between rounded-[2px] border bg-[#fdfdfd] " + className}>
      <div className="flex items-center">{children}</div>
      <svg width="9" height="6" viewBox="0 0 9 6" fill="none" stroke="#555" strokeWidth="1.1"><path d="M0.5 0.7L4.5 4.7L8.5 0.7" /></svg>
    </div>
  );
}

function PcbWindow() {
  return (
    <div className="flex h-[729px] w-[737px] flex-col overflow-hidden border-l border-[#9c9c9c] bg-[#f0f0f0] text-black">
      <div className="flex h-[36px] shrink-0 items-center pl-[4px] pt-[2px]">
        <Combo className="w-[201px] border-[#d0d0d0] pl-[3px] pr-[3px]"><Fit w={146}>Piste: 1.000 mm (39.37 mils)</Fit></Combo>
        <div className="ml-[2px] flex size-[30px] shrink-0 items-center justify-center border border-[#0078d7] bg-[#b3d6f4]">
          <svg width="24" height="24" viewBox="0 0 24 24" fill="none"><path d="M1.5 1V16q0 5 5 5h11q5 0 5-5V1" stroke={G} strokeWidth="2" /><path d="M7 8.5h10M7 12h10" stroke={G} strokeWidth="1.1" /><circle cx="12" cy="21" r="3" fill={B} /></svg>
        </div>
        <div className="ml-[4px] h-[26px] w-px shrink-0 bg-[#9a9a9a]" />
        <Combo className="ml-[5px] w-[202px] border-[#d0d0d0] pl-[3px] pr-[3px]"><Fit w={175}>Via: utiliser la taille des netclasses</Fit></Combo>
        <div className="ml-[4px] h-[26px] w-px shrink-0 bg-[#9a9a9a]" />
        <Combo className="ml-[5px] w-[137px] border-[#a8a8a8] pl-[6px] pr-[3px]">
          <div className="mr-[5px] size-[14px] border border-black bg-[#c83434]" /><Fit w={63}>F.Cu (PgUp)</Fit>
        </Combo>
        <svg className="ml-[5px] shrink-0" width="24" height="24"><path d="M0 0H16L7 24H0z" fill="#c83434" /><path d="M18 0H24V24H8z" fill="#4d7fc4" /><path d="M17.5 0L7.5 24" stroke="#fff" strokeWidth="3" /><path d="M17.5 0L7.5 24" stroke="#222" strokeWidth="1.5" strokeDasharray="1.5 1.5" /></svg>
        <div className="ml-[7px] h-[26px] w-px shrink-0 bg-[#9a9a9a]" />
        <Combo className="ml-[5px] w-[150px] border-[#d0d0d0] pl-[3px] pr-[3px]"><Fit w={103}>0.1000 mm (3.94 mil</Fit></Combo>
      </div>
      <div className="flex h-[668px] shrink-0">
        <ToolColumn icons={leftIcons} active={[0, 5, 10, 11, 16, 23]} className="w-[33px] pr-[2px] pt-[4px]" />
        <div className="flex h-[668px] w-[519px] shrink-0 border border-[#a0a0a0]"><Board /></div>
        <ToolColumn icons={rightIcons} active={[0]} className="w-[34px] pt-[4px]" />
        <Dock />
      </div>
      <div className="flex shrink-0 pl-[10px] pt-px leading-[13px]">
        {([["Pads", 25, "23", "w-[54px]"], ["Vias", 21, "4", "w-[50px]"], ["Segments de Piste", 96, "32", "w-[125px]"], ["Nets", 24, "4", "w-[53px]"], ["Non Routé", 57, "2", "w-[90px]"]] as [string, number, string, string][]).map(([a, w, b, cls]) => (
          <div key={a} className={"flex flex-col gap-px " + cls}><Fit w={w} className="w-max">{a}</Fit><span>{b}</span></div>
        ))}
      </div>
    </div>
  );
}

export default function App() {
  return (
    <div className="flex h-[729px] w-[1492px] overflow-hidden bg-white font-['Open_Sans','Noto_Sans',sans-serif] text-[11.5px] leading-[16px]">
      <ChatPane />
      <PcbWindow />
    </div>
  );
}
